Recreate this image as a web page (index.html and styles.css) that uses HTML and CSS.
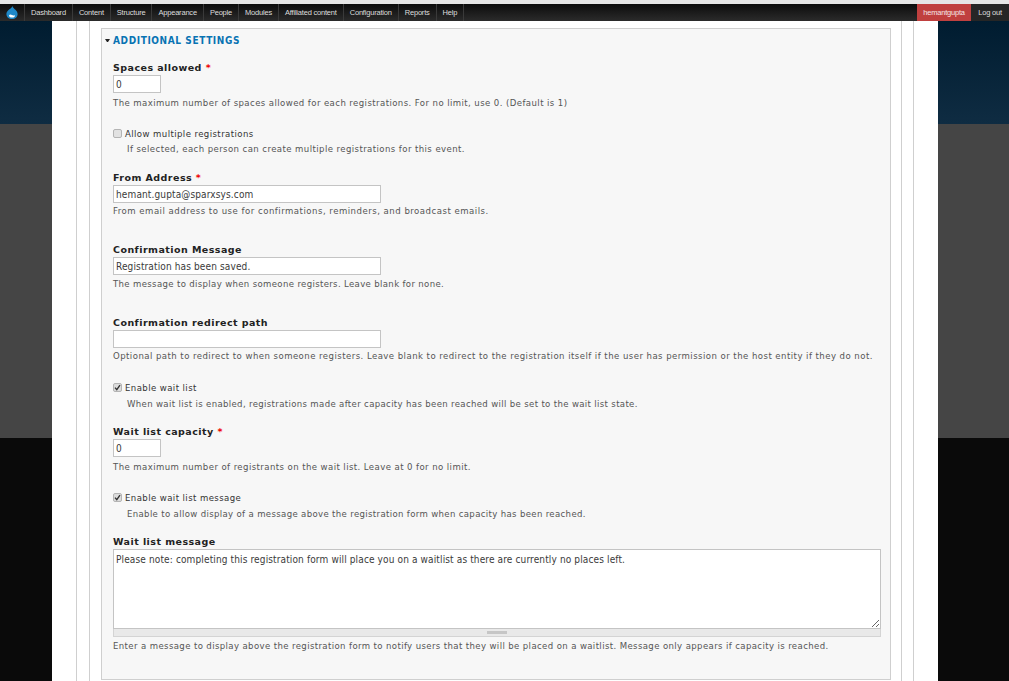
FILE: index.html
```html
<!DOCTYPE html>
<html lang="en">
<head>
<meta charset="utf-8">
<title>Additional settings</title>
<link rel="stylesheet" href="styles.css">
</head>
<body>
<div class="topstrip"></div>
<nav class="toolbar">
  <a class="home" href="#"><svg width="12" height="13" viewBox="0 0 12 13"><path d="M6.4 0C6.8 1.8 8.2 2.6 9.4 3.7 10.8 5 11.6 6.4 11.6 8 11.6 11 9.2 13 6 13 2.8 13 .4 11 .4 8 .4 6.2 1.4 4.8 2.8 3.7 4.2 2.6 5.8 2 6.4 0Z" fill="#1e88c8"/><path d="M3 9.2C3.8 8.2 5 8.3 6 9 7 9.7 8 9.6 8.8 8.9 9.2 10.6 8 11.6 6 11.6 4.2 11.6 3 10.7 3 9.2Z" fill="#fff"/></svg></a>
  <ul class="menu">
    <li><a href="#">Dashboard</a></li>
    <li><a href="#">Content</a></li>
    <li><a href="#">Structure</a></li>
    <li><a href="#">Appearance</a></li>
    <li><a href="#">People</a></li>
    <li><a href="#">Modules</a></li>
    <li><a href="#">Affiliated content</a></li>
    <li><a href="#">Configuration</a></li>
    <li><a href="#">Reports</a></li>
    <li><a href="#">Help</a></li>
  </ul>
  <div class="account">
    <a class="user" href="#">hemantgupta</a>
    <a class="logout" href="#">Log out</a>
  </div>
</nav>
<div class="stage">
  <main class="sheet">
    <div class="frame">
      <div class="frame-inner">
        <section class="fieldset">
          <h2 class="legend"><span class="caret"></span>Additional settings</h2>

          <div class="item first">
            <label class="label">Spaces allowed <span class="req">*</span></label>
            <input class="input short" type="text" value="0">
            <p class="desc d3">The maximum number of spaces allowed for each registrations. For no limit, use 0. (Default is 1)</p>
          </div>

          <div class="item gap16">
            <label class="checkline"><input class="box" type="checkbox"><span>Allow multiple registrations</span></label>
            <p class="desc indent">If selected, each person can create multiple registrations for this event.</p>
          </div>

          <div class="item gap14">
            <label class="label">From Address <span class="req">*</span></label>
            <input class="input long" type="text" value="hemant.gupta@sparxsys.com">
            <p class="desc loose">From email address to use for confirmations, reminders, and broadcast emails.</p>
          </div>

          <div class="item gap24">
            <label class="label">Confirmation Message</label>
            <input class="input long" type="text" value="Registration has been saved.">
            <p class="desc d2 tight">The message to display when someone registers. Leave blank for none.</p>
          </div>

          <div class="item gap24">
            <label class="label">Confirmation redirect path</label>
            <input class="input long" type="text" value="">
            <p class="desc wide">Optional path to redirect to when someone registers. Leave blank to redirect to the registration itself if the user has permission or the host entity if they do not.</p>
          </div>

          <div class="item gap17">
            <label class="checkline"><input class="box" type="checkbox" checked><span>Enable wait list</span></label>
            <p class="desc indent i3 tight">When wait list is enabled, registrations made after capacity has been reached will be set to the wait list state.</p>
          </div>

          <div class="item gap13">
            <label class="label">Wait list capacity <span class="req">*</span></label>
            <input class="input short" type="text" value="0">
            <p class="desc d3">The maximum number of registrants on the wait list. Leave at 0 for no limit.</p>
          </div>

          <div class="item gap16">
            <label class="checkline"><input class="box" type="checkbox" checked><span>Enable wait list message</span></label>
            <p class="desc indent i3 tight">Enable to allow display of a message above the registration form when capacity has been reached.</p>
          </div>

          <div class="item gap13">
            <label class="label">Wait list message</label>
            <textarea class="area" readonly>Please note: completing this registration form will place you on a waitlist as there are currently no places left.</textarea>
            <div class="grippie"><span class="grip"></span></div>
            <p class="desc d2 snug">Enter a message to display above the registration form to notify users that they will be placed on a waitlist. Message only appears if capacity is reached.</p>
          </div>
        </section>
      </div>
    </div>
  </main>
</div>
</body>
</html>
```

FILE: styles.css
```css
* { box-sizing: border-box; }
html, body { margin: 0; height: 100%; overflow: hidden; }
body {
  display: flex;
  flex-direction: column;
  font-family: "DejaVu Sans", Verdana, sans-serif;
  color: #3b3b3b;
  background: #0a0a0a;
}
.topstrip { height: 4px; background: #e6e6e6; flex: none; }
.toolbar {
  flex: none;
  height: 17px;
  display: flex;
  align-items: stretch;
  background: linear-gradient(#0c0c0c, #2b2b2b);
  font-family: "Liberation Sans", Arial, sans-serif;
  font-size: 7.5px;
  letter-spacing: -.2px;
}
.toolbar a { color: #ddd; text-decoration: none; }
.home {
  width: 25px;
  display: flex;
  justify-content: center;
  align-items: center;
  border-right: 1px solid #3a3a3a;
}
.menu { display: flex; margin: 0; padding: 0; list-style: none; }
.menu li { display: flex; align-items: center; padding: 0 6px; border-right: 1px solid #3a3a3a; white-space: nowrap; }
.account { display: flex; margin-left: auto; }
.account a { display: flex; align-items: center; white-space: nowrap; }
.user { width: 54px; justify-content: center; background: #c0403f; }
.toolbar .user { color: #f5e6e6; }
.logout { width: 38px; justify-content: center; background: #262626; }

.stage {
  flex: 1;
  min-height: 0;
  padding: 0 71px 0 52px;
  background: linear-gradient(#001c30 0, #0f2c42 103px, #454545 103px, #454545 417px, #0a0a0a 417px);
}
.sheet { height: 100%; background: #fff; padding: 0 24px; overflow: hidden; }
.frame { height: 100%; border: solid #cfcfcf; border-width: 0 1px; padding: 0 11px 0 12px; }
.frame-inner { height: 100%; border: solid #cfcfcf; border-width: 0 1px; padding: 7px 10px 0 11px; }
.fieldset {
  border: 1px solid #cfcfcf;
  background: #f7f7f7;
  padding: 0 9px 0 11px;
  height: 652px;
}
.legend {
  display: flex;
  align-items: center;
  margin: 5px 0 0;
  height: 13px;
  font-family: "DejaVu Sans Condensed", "DejaVu Sans", sans-serif;
  font-size: 10px;
  line-height: 14px;
  font-weight: bold;
  letter-spacing: .6px;
  text-transform: uppercase;
  color: #0873b3;
}
.caret {
  flex: none;
  width: 5px; height: 3px; margin: 0 3px 0 -8px;
  border: solid transparent; border-width: 3px 2.5px 0;
  border-top-color: #222;
}
.item { display: block; }
.first { margin-top: 13px; }
.gap13 { margin-top: 13px; }
.gap14 { margin-top: 14px; }
.gap16 { margin-top: 16px; }
.gap17 { margin-top: 17px; }
.gap24 { margin-top: 24px; }
.label {
  display: block;
  height: 14px;
  line-height: 15px;
  margin-bottom: 1px;
  font-size: 9.5px;
  font-weight: bold;
  letter-spacing: .45px;
  color: #222;
}
.req { color: #e00; }
.input {
  display: block;
  height: 18px;
  border: 1px solid #c4c4c4;
  background: #fff;
  padding: 0 2px;
  font: 10px/16px "DejaVu Sans Condensed", "DejaVu Sans", sans-serif;
  letter-spacing: .13px;
  color: #3a3a3a;
  border-radius: 0;
}
.short { width: 48px; }
.long { width: 268px; }
.desc {
  margin: 1px 0 0;
  line-height: 14px;
  font-family: "DejaVu Sans Condensed", "DejaVu Sans", sans-serif;
  font-size: 9.5px;
  letter-spacing: .42px;
  white-space: nowrap;
  color: #555;
}
.desc.d2 { margin-top: 2px; }
.desc.d3 { margin-top: 3px; }
.desc.indent { margin: 2px 0 0 14px; }
.desc.i3 { margin-top: 3px; }
.desc.tight { letter-spacing: .35px; }
.desc.snug { letter-spacing: .385px; }
.desc.wide { letter-spacing: .455px; }
.desc.loose { letter-spacing: .5px; }
.checkline {
  display: flex;
  align-items: center;
  height: 14px;
  font-family: "DejaVu Sans Condensed", "DejaVu Sans", sans-serif;
  font-size: 9.5px;
  letter-spacing: .42px;
  color: #333;
}
.box {
  appearance: none;
  flex: none;
  width: 9px;
  height: 9px;
  margin: 0 3px 0 0;
  border: 1px solid #b4b4b4;
  border-radius: 2px;
  background: #e2e2e2;
}
.box:checked {
  background: #dcdcdc url("data:image/svg+xml,%3Csvg xmlns='http://www.w3.org/2000/svg' viewBox='0 0 7 7'%3E%3Cpath d='M1 3.6 2.8 5.6 6 1.2' fill='none' stroke='%23333' stroke-width='1.4'/%3E%3C/svg%3E") center / 7px 7px no-repeat;
}
.area {
  display: block;
  width: 768px;
  height: 80px;
  margin: 0;
  padding: 3px 2px;
  border: 1px solid #c4c4c4;
  border-radius: 0;
  background: #fff;
  font: 10px/14px "DejaVu Sans Condensed", "DejaVu Sans", sans-serif;
  letter-spacing: .13px;
  color: #3a3a3a;
}
.grippie {
  width: 768px;
  height: 8px;
  display: flex;
  justify-content: center;
  align-items: center;
  background: #e9e9e9;
  border: solid #d4d4d4;
  border-width: 0 1px 1px;
}
.grip { width: 20px; height: 3px; background: #c6c6c6; }
```
